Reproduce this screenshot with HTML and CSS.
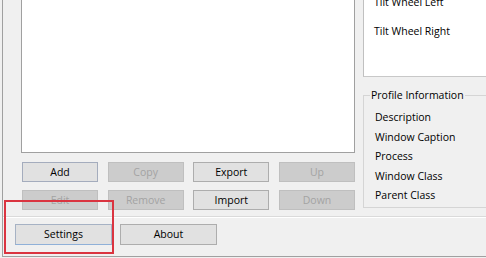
FILE: index.html
```html
<!DOCTYPE html>
<html>
<head>
<meta charset="utf-8">
<link rel="stylesheet" href="styles.css">
</head>
<body>
<div class="frame">
  <div class="top">
    <div class="left-col">
      <div class="list"></div>
      <div class="btn-grid">
        <button class="btn btn-default">Add</button>
        <button class="btn" disabled>Copy</button>
        <button class="btn">Export</button>
        <button class="btn" disabled>Up</button>
        <button class="btn" disabled>Edit</button>
        <button class="btn" disabled>Remove</button>
        <button class="btn">Import</button>
        <button class="btn" disabled>Down</button>
      </div>
    </div>
    <div class="right-col">
      <div class="tilt-box">
        <div class="tilt-item first">Tilt Wheel Left</div>
        <div class="tilt-item">Tilt Wheel Right</div>
      </div>
      <fieldset class="group">
        <legend class="group-title">Profile Information</legend>
        <div class="info-item">Description</div>
        <div class="info-item">Window Caption</div>
        <div class="info-item">Process</div>
        <div class="info-item">Window Class</div>
        <div class="info-item">Parent Class</div>
      </fieldset>
    </div>
  </div>
  <div class="separator"></div>
  <div class="bottom-row">
    <button class="btn btn-wide btn-focus">Settings</button>
    <button class="btn btn-wide">About</button>
  </div>
</div>
<div class="highlight"></div>
</body>
</html>
```

FILE: styles.css
```css
html, body {
  margin: 0;
  padding: 0;
}
body {
  width: 486px;
  height: 258px;
  overflow: hidden;
  position: relative;
  background: #f0f0f0;
  font-family: "Open Sans", "Noto Sans", sans-serif;
  font-size: 10.5px;
  color: #000;
}
.frame {
  margin-left: 2px;
  height: 256px;
  border-left: 1px solid #a0a0a0;
  border-bottom: 1px solid #a0a0a0;
  display: flex;
  flex-direction: column;
}
.top {
  display: flex;
  height: 216px;
}
.left-col {
  margin-left: 18px;
  width: 334px;
  display: flex;
  flex-direction: column;
}
.list {
  height: 152px;
  background: #fff;
  border: 1px solid #a0a0a0;
  border-top: none;
}
.btn-grid {
  margin-top: 9px;
  margin-left: 1px;
  display: grid;
  grid-template-columns: repeat(4, 76px);
  grid-template-rows: 20px 20px;
  row-gap: 8px;
  justify-content: space-between;
}
.btn {
  box-sizing: border-box;
  margin: 0;
  padding: 0;
  background: #e1e1e1;
  border: 1px solid #adadad;
  font-family: inherit;
  font-size: 10.5px;
  color: #000;
  display: flex;
  align-items: center;
  justify-content: center;
  line-height: 1;
}
.btn:disabled {
  background: #cccccc;
  border-color: #bfbfbf;
  color: #a3a3a3;
}
.btn-default {
  border-color: #a4acbd;
}
.right-col {
  margin-left: 8px;
  flex: 1;
  min-width: 0;
  display: flex;
  flex-direction: column;
}
.tilt-box {
  height: 77px;
  box-sizing: border-box;
  background: #fff;
  border-left: 1px solid #c0c0c0;
  border-bottom: 1px solid #c8c8c8;
  padding-left: 10px;
  overflow: hidden;
}
.tilt-item {
  height: 29px;
  line-height: 16px;
}
.tilt-item.first {
  margin-top: -6px;
}
.group {
  margin: 10px 0 0 0;
  padding: 0 0 1px 11px;
  border: 1px solid #d5d5d5;
  border-right: none;
  min-width: 0;
}
.group-title {
  padding: 0 1px;
  margin-left: -5px;
  line-height: 16px;
}
.info-item {
  height: 19.5px;
  line-height: 19.5px;
}
.info-item:first-of-type {
  margin-top: 5px;
}
.separator {
  height: 0;
  border-top: 1px solid #dadada;
  border-bottom: 1px solid #fff;
}
.bottom-row {
  margin-top: 6px;
  padding-left: 12px;
  display: flex;
  gap: 8px;
}
.btn-wide {
  width: 97px;
  height: 21px;
}
.btn-focus {
  border-color: #a6b2c4;
  border-bottom-color: #8fb0d8;
}
.highlight {
  position: absolute;
  left: 4px;
  top: 200px;
  width: 110px;
  height: 54px;
  box-sizing: border-box;
  border: 2px solid rgb(218, 52, 64);
  pointer-events: none;
}
```
